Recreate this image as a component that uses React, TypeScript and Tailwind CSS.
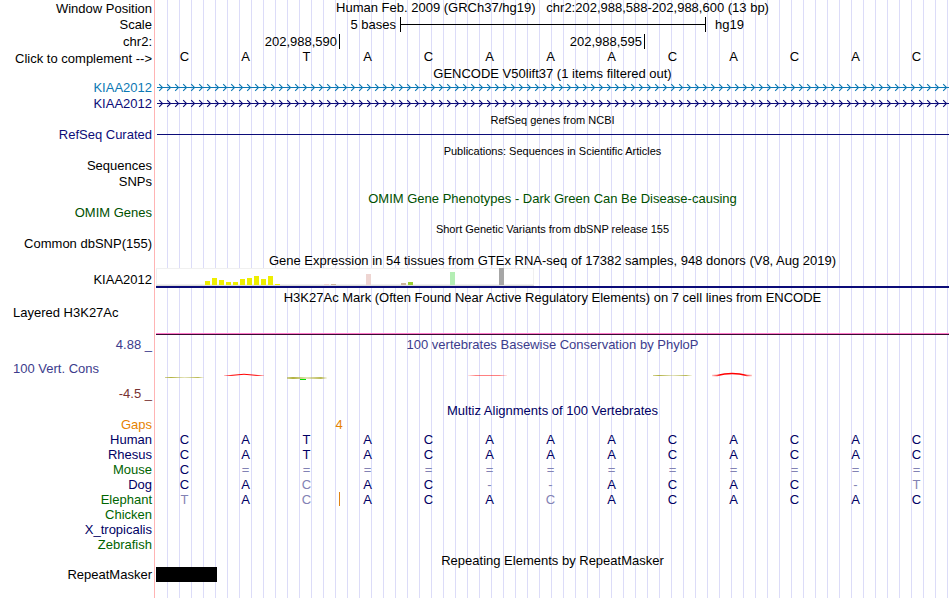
import type { ReactNode } from "react";
import { clsx } from "clsx";

type RowProps = {
  label?: ReactNode;
  labelClass?: string;
  className?: string;
  children?: ReactNode;
};

/* One line of the browser: a right-aligned label and the track area. */
function Row({ label, labelClass, className, children }: RowProps) {
  return (
    <div className={clsx("flex items-center", className ?? "h-[15px]")}>
      <div className={clsx("w-[156px] shrink-0 whitespace-nowrap pr-1 text-right", labelClass)}>{label}</div>
      <div className="h-full min-w-0 flex-1">{children}</div>
    </div>
  );
}

function Title({ small, className, children }: { small?: boolean; className?: string; children: ReactNode }) {
  return (
    <h2 className={clsx("flex h-full items-center justify-center whitespace-pre", small && "text-[11px]", className)}>
      {children}
    </h2>
  );
}

/* A transcript drawn as a line with strand chevrons every 8px. */
function Transcript({ id, color }: { id: string; color: string }) {
  return (
    <svg className="block h-[15px] w-full pl-px" aria-hidden="true">
      <defs>
        <pattern id={id} width="8" height="15" patternUnits="userSpaceOnUse">
          <path d="M2.2 4.2 L5.5 7.5 L2.2 10.8" fill="none" stroke={color} strokeWidth="1.1" />
        </pattern>
      </defs>
      <rect y="7" width="100%" height="1" fill={color} />
      <rect width="100%" height="15" fill={`url(#${id})`} />
    </svg>
  );
}

const BASES = "CATACAAACACAC".split("");

const TISSUES = 54;
const EXPRESSION: Record<number, [number, string]> = {
  7: [4, "#eeee00"],
  8: [7, "#eeee00"],
  9: [5, "#eeee00"],
  10: [3, "#eeee00"],
  11: [3, "#eeee00"],
  12: [6, "#eeee00"],
  13: [7, "#eeee00"],
  14: [9, "#eeee00"],
  15: [6, "#eeee00"],
  16: [9, "#eeee00"],
  17: [1, "#eeee00"],
  24: [1, "#eed5d2"],
  25: [1, "#cdb79e"],
  30: [11, "#eed5d2"],
  35: [2, "#cdb79e"],
  36: [3, "#9acd32"],
  42: [13, "#b4eeb4"],
  49: [17, "#a6a6a6"],
};

const NAVY = "text-[#000064]";
const GREEN = "text-[#006400]";

/* Lower-case letters are bases that differ from the human sequence. */
const SPECIES = [
  { name: "Human", color: NAVY, seq: "CATACAAACACAC" },
  { name: "Rhesus", color: NAVY, seq: "CATACAAACACAC" },
  { name: "Mouse", color: GREEN, seq: "C============" },
  { name: "Dog", color: NAVY, seq: "CAcAC--ACAC-t" },
  { name: "Elephant", color: GREEN, seq: "tAcACAcACACAC", insertBefore: 3 },
  { name: "Chicken", color: GREEN, seq: "" },
  { name: "X_tropicalis", color: NAVY, seq: "" },
  { name: "Zebrafish", color: GREEN, seq: "" },
];

const HEAD_CELL = "h-[15px] p-0 pr-1 text-right font-normal";

function Conservation() {
  return (
    <svg className="block h-8 w-full" role="img" aria-label="PhyloP conservation scores">
      <defs>
        <linearGradient id="olive">
          <stop offset="0" stopColor="#a8a828" stopOpacity="0.5" />
          <stop offset="0.15" stopColor="#a8a828" stopOpacity="0.9" />
          <stop offset="0.5" stopColor="#b8b850" stopOpacity="0.4" />
          <stop offset="0.85" stopColor="#a8a828" stopOpacity="0.8" />
          <stop offset="1" stopColor="#b8b850" stopOpacity="0.1" />
        </linearGradient>
        <linearGradient id="red">
          <stop offset="0" stopColor="#ff0000" stopOpacity="0.2" />
          <stop offset="0.2" stopColor="#ff0000" />
          <stop offset="0.8" stopColor="#ff0000" />
          <stop offset="1" stopColor="#ff0000" stopOpacity="0.2" />
        </linearGradient>
      </defs>
      <rect x="9" y="25" width="39" height="1" fill="url(#olive)" />
      <path d="M68 23.5 H74 Q88 21 102 23.5 H108" fill="none" stroke="url(#red)" strokeWidth="1" />
      <rect x="131" y="25" width="40" height="2" fill="url(#olive)" />
      <rect x="144" y="27" width="6" height="1" fill="#00e000" />
      <rect x="312" y="23" width="39" height="1" fill="url(#red)" opacity="0.5" />
      <rect x="497" y="23" width="39" height="1" fill="url(#olive)" />
      <path d="M556 23.5 H561 Q576 19.5 591 23.5 H596" fill="none" stroke="url(#red)" strokeWidth="1.4" />
    </svg>
  );
}

export default function App() {
  return (
    <main className="min-h-screen bg-white bg-[linear-gradient(to_right,white_154px,#ffb4b4_154px,#ffb4b4_155px,white_155px,white_156px,transparent_156px),repeating-linear-gradient(to_right,transparent_0px,transparent_11px,#dcdcf8_11px,#dcdcf8_12px)] pr-px pb-4 font-['Liberation_Sans',Arial,sans-serif] text-[13px] leading-[15px] text-black">
      <Row label="Window Position" className="h-4">
        <h1 className="flex h-[15px] items-center justify-center whitespace-pre">
          {"Human Feb. 2009 (GRCh37/hg19)   chr2:202,988,588-202,988,600 (13 bp)"}
        </h1>
      </Row>
      <Row label="Scale" className="h-[17px]">
        <div className="grid h-full grid-cols-13 items-center">
          <span className="col-span-4 pr-1 text-right">5 bases</span>
          <div className="col-span-5 -mr-px flex h-[15px] items-center border-x border-black">
            <div className="h-px w-full bg-black" />
          </div>
          <span className="col-span-4 pl-2.5">hg19</span>
        </div>
      </Row>
      <Row label="chr2:" className="h-[17px]">
        <div className="grid h-full grid-cols-13 items-center">
          <span className="col-span-3 pr-0.5 text-right">202,988,590</span>
          <span className="col-span-5 border-l border-black pr-0.5 text-right">202,988,595</span>
          <span className="col-span-5 h-[15px] border-l border-black" />
        </div>
      </Row>
      <Row label={<button type="button">Click to complement --&gt;</button>} className="h-4">
        <div className="grid h-3.5 grid-cols-13 text-center leading-3.5">
          {BASES.map((base, i) => (
            <span key={i} className="pr-1">{base}</span>
          ))}
        </div>
      </Row>

      <Row className="h-3.5"><Title>GENCODE V50lift37 (1 items filtered out)</Title></Row>
      <Row label="KIAA2012" labelClass="text-[#0c78b4]"><Transcript id="gencode-coding" color="#0c78b4" /></Row>
      <Row label="KIAA2012" labelClass="text-[#0c0c78]" className="mt-px h-[15px]"><Transcript id="gencode-canonical" color="#0c0c78" /></Row>

      <Row className="h-4 pt-0.5"><Title small>RefSeq genes from NCBI</Title></Row>
      <Row label="RefSeq Curated" labelClass="text-[#0c0c78]">
        <div className="flex h-full items-center pl-px">
          <div className="h-px w-full bg-[#0c0c78]" />
        </div>
      </Row>

      <Row className="h-4 pt-0.5"><Title small>Publications: Sequences in Scientific Articles</Title></Row>
      <Row label="Sequences" />
      <Row label="SNPs" className="h-4" />

      <Row className="h-4 pt-0.5"><Title className="text-[#005000]">OMIM Gene Phenotypes - Dark Green Can Be Disease-causing</Title></Row>
      <Row label="OMIM Genes" labelClass="text-[#005000]" />

      <Row className="h-4 pt-0.5"><Title small>Short Genetic Variants from dbSNP release 155</Title></Row>
      <Row label="Common dbSNP(155)" />

      <Row className="h-[17px] pt-0.5">
        <Title>Gene Expression in 54 tissues from GTEx RNA-seq of 17382 samples, 948 donors (V8, Aug 2019)</Title>
      </Row>
      <Row label="KIAA2012" labelClass="pt-0.5" className="h-5">
        <div className="h-full border-b-2 border-[#0c0c78]">
          <div className="flex h-full w-[378px] items-end gap-0.5 border-b border-[#dcdcdc] bg-white shadow-[inset_0_0_0_1px_#f0f0f0]">
            {Array.from({ length: TISSUES }, (_, i) => {
              const [height, background] = EXPRESSION[i] ?? [0, "transparent"];
              return <div key={i} className="w-[5px]" style={{ height, background }} />;
            })}
          </div>
        </div>
      </Row>

      <Row className="mt-0.5 h-[17px] pb-0.5">
        <Title>H3K27Ac Mark (Often Found Near Active Regulatory Elements) on 7 cell lines from ENCODE</Title>
      </Row>
      <Row label={<span className="block pl-2.5 text-left leading-3">Layered H3K27Ac</span>} labelClass="self-start pl-[3px]" className="h-7">
        <div className="flex h-full flex-col justify-end">
          <div className="h-px bg-[#ff78c8]" />
          <div className="h-px bg-[#3c0a32]" />
        </div>
      </Row>

      <Row label="4.88 _" labelClass="text-[#3c3c8c]" className="mt-px h-4">
        <Title className="text-[#3c3c8c]">100 vertebrates Basewise Conservation by PhyloP</Title>
      </Row>
      <Row label={<span className="block pl-2.5 text-left">100 Vert. Cons</span>} labelClass="pl-[3px] text-[#3c3c8c]" className="h-8">
        <Conservation />
      </Row>
      <Row label="-4.5 _" labelClass="text-[#783232]" className="h-[18px]" />

      <Row className="h-[15px] pt-0.5"><Title className={NAVY}>Multiz Alignments of 100 Vertebrates</Title></Row>
      <table className="w-full table-fixed border-collapse" aria-label="Multiz alignments">
        <colgroup>
          <col className="w-[156px]" />
          {BASES.map((_, i) => <col key={i} />)}
        </colgroup>
        <tbody>
          <tr className="text-[#e68200]">
            <th scope="row" className={HEAD_CELL}>Gaps</th>
            {BASES.map((_, i) => (
              <td key={i} className="relative p-0">
                {i === 3 && <span className="absolute top-0 left-0 -translate-x-1/2">4</span>}
              </td>
            ))}
          </tr>
          {SPECIES.map(({ name, color, seq, insertBefore }) => (
            <tr key={name}>
              <th scope="row" className={clsx(HEAD_CELL, color)}>{name}</th>
              {BASES.map((_, i) => {
                const base = seq[i] ?? "";
                const matches = /[A-Z]/.test(base);
                return (
                  <td key={i} className={clsx("relative p-0 pr-1 text-center", matches ? NAVY : "text-[#8282b4]")}>
                    {base.toUpperCase()}
                    {insertBefore === i && <span className="absolute top-0 left-0 h-3.5 w-px bg-[#e08214]" />}
                  </td>
                );
              })}
            </tr>
          ))}
        </tbody>
      </table>

      <Row className="h-[15px] pt-0.5"><Title>Repeating Elements by RepeatMasker</Title></Row>
      <Row label="RepeatMasker">
        <div className="grid h-full grid-cols-13">
          <div className="bg-black" />
        </div>
      </Row>
    </main>
  );
}
